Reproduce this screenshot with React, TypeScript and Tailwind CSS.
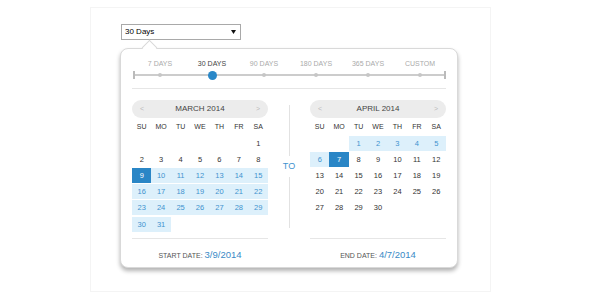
const ranges = ["7 DAYS", "30 DAYS", "90 DAYS", "180 DAYS", "365 DAYS", "CUSTOM"];
const weekdays = ["SU", "MO", "TU", "WE", "TH", "FR", "SA"];

type Cell = { day: number | null; mark?: "sel" | "range" };

const buildMonth = (offset: number, days: number, mark: (d: number) => Cell["mark"]) => {
  const cells: Cell[] = [];
  for (let i = 0; i < offset; i++) cells.push({ day: null });
  for (let d = 1; d <= days; d++) cells.push({ day: d, mark: mark(d) });
  while (cells.length % 7) cells.push({ day: null });
  const rows: Cell[][] = [];
  for (let i = 0; i < cells.length; i += 7) rows.push(cells.slice(i, i + 7));
  return rows;
};

const march = buildMonth(6, 31, (d) => (d === 9 ? "sel" : d > 9 ? "range" : undefined));
const april = buildMonth(2, 30, (d) => (d === 7 ? "sel" : d < 7 ? "range" : undefined));

const Calendar = ({ title, rows }: { title: string; rows: Cell[][] }) => (
  <div>
    <div className="h-[18px] rounded-full bg-[#ececec] flex items-center justify-between px-[8px]">
      <span className="text-[7px] text-[#bbbbbb]">&lt;</span>
      <span className="text-[8px] text-[#444]">{title}</span>
      <span className="text-[7px] text-[#bbbbbb]">&gt;</span>
    </div>
    <div className="grid grid-cols-7 h-[15px] mt-[1.5px] items-center text-center text-[7px] text-[#333]">
      {weekdays.map((w) => (
        <span key={w}>{w}</span>
      ))}
    </div>
    <div className="flex flex-col gap-y-[1.2px] mt-[1.2px]">
      {rows.map((row, i) => (
        <div key={i} className="grid grid-cols-7 h-[15px] text-[7.5px]">
          {row.map((c, j) => (
            <div
              key={j}
              className={
                "flex items-center justify-center " +
                (c.mark === "sel"
                  ? "bg-[#2a86c6] text-white"
                  : c.mark === "range"
                  ? "bg-[#ddf0fb] text-[#3f93cf]"
                  : "text-[#333]")
              }
            >
              {c.day ?? ""}
            </div>
          ))}
        </div>
      ))}
    </div>
  </div>
);

export default function App() {
  return (
    <div className="w-[590px] h-[300px] bg-white overflow-hidden font-['Liberation_Sans',Arial,sans-serif]">
      <div className="mt-[7px] ml-[90px] w-[401px] h-[285px] border border-[#f4f4f4] pt-[16px] pl-[30px]">
        <div className="w-[120px] h-[16px] border border-[#a9a9a9] bg-white flex items-center justify-between pl-[3px] pr-[4px] text-[8px] text-black">
          <span>30 Days</span>
          <svg width="5" height="4" viewBox="0 0 5 4">
            <path d="M0 0 H5 L2.5 4 Z" fill="#111" />
          </svg>
        </div>

        <div className="relative mt-[8px] -ml-[1px] w-[338px] h-[220px] rounded-[8px] border border-[#d9d9d9] bg-white shadow-[0_3px_4px_rgba(0,0,0,0.3)] px-[11px]">
          <div className="absolute left-[23px] -top-[7px] w-[11px] h-[11px] rotate-45 bg-white border-l border-t border-[#d9d9d9]" />

          <div className="relative grid grid-cols-6 pl-[2px] pt-[10px] text-[7px] leading-[9px] text-center">
            {ranges.map((r, i) => (
              <span key={r} className={i === 1 ? "text-[#444]" : "text-[#aaaaaa]"}>
                {r}
              </span>
            ))}
          </div>

          <div className="relative h-[10px] mt-[2px]">
            <div className="absolute left-[1px] right-0 top-[4px] h-[2px] bg-[#cccccc]" />
            <div className="absolute left-[1px] top-[1px] h-[8px] w-[2px] bg-[#bbbbbb]" />
            <div className="absolute right-0 top-[1px] h-[8px] w-[2px] bg-[#bbbbbb]" />
            <div className="relative grid grid-cols-6 pl-[2px] h-full">
              {ranges.map((r, i) => (
                <div key={r} className="flex items-center justify-center">
                  {i === 1 ? (
                    <div className="w-[9px] h-[9px] rounded-full bg-[#2a88c8]" />
                  ) : (
                    <div className="w-[4px] h-[4px] rounded-full bg-[#c6c6c6]" />
                  )}
                </div>
              ))}
            </div>
          </div>

          <div className="mt-[8px] border-t border-[#e6e6e6]" />

          <div className="mt-[11px] grid grid-cols-[136px_42px_136px]">
            <Calendar title="MARCH 2014" rows={march} />
            <div className="flex flex-col items-center pt-[5px] pb-[4px]">
              <div className="flex-1 w-px bg-[#e2e2e2]" />
              <span className="py-[4px] text-[9px] text-[#3f93cf]">TO</span>
              <div className="flex-1 w-px bg-[#e2e2e2]" />
            </div>
            <Calendar title="APRIL 2014" rows={april} />
          </div>

          <div className="mt-[6px] grid grid-cols-[136px_42px_136px]">
            <div className="border-t border-[#e6e6e6] pt-[8px] text-center leading-[12px]">
              <span className="text-[7px] text-[#555]">START DATE: </span>
              <span className="text-[9.5px] text-[#3a8ac6]">3/9/2014</span>
            </div>
            <div />
            <div className="border-t border-[#e6e6e6] pt-[8px] text-center leading-[12px]">
              <span className="text-[7px] text-[#555]">END DATE: </span>
              <span className="text-[9.5px] text-[#3a8ac6]">4/7/2014</span>
            </div>
          </div>
        </div>
      </div>
    </div>
  );
}
